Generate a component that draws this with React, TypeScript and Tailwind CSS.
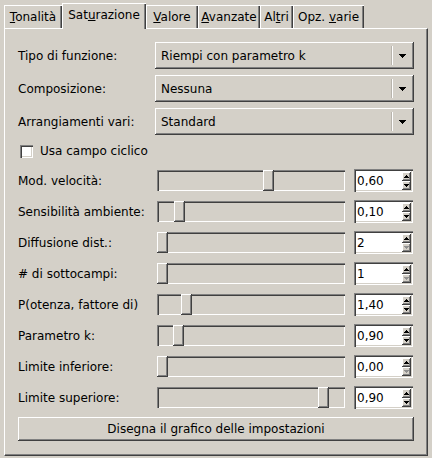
import React from "react";

const sunken =
  "shadow-[inset_1px_1px_0_#808080,inset_2px_2px_0_#404040,inset_-1px_-1px_0_#ffffff,inset_-2px_-2px_0_#d4d0c8]";
const raised =
  "shadow-[inset_-1px_-1px_0_#404040,inset_1px_1px_0_#ffffff,inset_-2px_-2px_0_#808080]";

const tabs = [
  { pre: "", key: "T", post: "onalità", w: "w-[58px]" },
  { pre: "Sat", key: "u", post: "razione", w: "w-[84px]", active: true },
  { pre: "", key: "V", post: "alore", w: "w-[52px]" },
  { pre: "", key: "A", post: "vanzate", w: "w-[62px]" },
  { pre: "Al", key: "t", post: "ri", w: "w-[33px]" },
  { pre: "Opz. ", key: "v", post: "arie", w: "w-[71px]" },
];

const combos = [
  { label: "Tipo di funzione:", value: "Riempi con parametro k" },
  { label: "Composizione:", value: "Nessuna" },
  { label: "Arrangiamenti vari:", value: "Standard" },
];

const sliders = [
  { label: "Mod. velocità:", value: "0,60", pos: 106, minDown: false },
  { label: "Sensibilità ambiente:", value: "0,10", pos: 17, minDown: false },
  { label: "Diffusione dist.:", value: "2", pos: 0, minDown: true },
  { label: "# di sottocampi:", value: "1", pos: 0, minDown: true },
  { label: "P(otenza, fattore di)", value: "1,40", pos: 24, minDown: false },
  { label: "Parametro k:", value: "0,90", pos: 16, minDown: false },
  { label: "Limite inferiore:", value: "0,00", pos: 0, minDown: true },
  { label: "Limite superiore:", value: "0,90", pos: 161, minDown: false },
];

function Arrow({ up, grey }: { up?: boolean; grey?: boolean }) {
  return (
    <svg width="5" height="3" viewBox="0 0 5 3" shapeRendering="crispEdges">
      <polygon
        points={up ? "2.5,0 5,3 0,3" : "0,0 5,0 2.5,3"}
        fill={grey ? "#909090" : "#000"}
      />
    </svg>
  );
}

function Spin({ value, minDown }: { value: string; minDown: boolean }) {
  return (
    <div className={`flex h-[23px] w-[59px] items-center bg-white pl-[3px] pr-[2px] ${sunken}`}>
      <span className="flex-1 text-[12px] leading-none text-black">{value}</span>
      <div className="flex h-[18px] w-[9px] flex-col">
        <div className={`flex h-[9px] items-center justify-center bg-[#d4d0c8] ${raised}`}>
          <Arrow up />
        </div>
        <div className={`flex h-[9px] items-center justify-center bg-[#d4d0c8] ${raised}`}>
          <Arrow grey={minDown} />
        </div>
      </div>
    </div>
  );
}

export default function App() {
  return (
    <div className="h-[458px] w-[432px] overflow-hidden bg-[#d4d0c8] pt-[3px] font-['DejaVu_Sans',sans-serif] text-[12px] text-black">
      <div className="ml-[4px] flex h-[25px] items-end">
        {tabs.map((t) => (
          <div
            key={t.key}
            className={
              t.active
                ? `relative z-10 -mb-px flex h-[26px] ${t.w} items-center justify-center bg-[#d4d0c8] pb-[2px] shadow-[inset_1px_1px_0_#ffffff,inset_-1px_0_0_#404040,inset_-2px_0_0_#808080]`
                : `flex h-[23px] ${t.w} items-center justify-center bg-[#d4d0c8] shadow-[inset_1px_1px_0_#ffffff,inset_-1px_0_0_#404040,inset_-2px_0_0_#808080]`
            }
          >
            <span className="whitespace-pre">
              {t.pre}
              <span className="underline">{t.key}</span>
              {t.post}
            </span>
          </div>
        ))}
      </div>

      <div className="ml-[4px] flex h-[428px] w-[424px] flex-col border-b border-l border-r border-t border-b-[#404040] border-l-white border-r-[#404040] border-t-white pl-[13px] pr-[12px] pt-[13px] shadow-[inset_-1px_-1px_0_#808080]">
        <div className="flex flex-col gap-[6px]">
          {combos.map((c) => (
            <div key={c.label} className="flex h-[27px] items-center">
              <span className="w-[137px]">{c.label}</span>
              <div
                className={`flex h-[27px] w-[259px] items-center bg-[#d4d0c8] pl-[6px] ${raised}`}
              >
                <span className="flex-1">{c.value}</span>
                <div className="h-[19px] w-px bg-white shadow-[-1px_0_0_#b8b4ac]" />
                <div className="flex w-[21px] justify-center pr-[2px]">
                  <svg width="7" height="4" viewBox="0 0 7 4" shapeRendering="crispEdges">
                    <rect x="0" y="0" width="7" height="1" fill="#000" />
                    <rect x="1" y="1" width="5" height="1" fill="#000" />
                    <rect x="2" y="2" width="3" height="1" fill="#000" />
                    <rect x="3" y="3" width="1" height="1" fill="#000" />
                  </svg>
                </div>
              </div>
            </div>
          ))}
        </div>

        <div className="mb-[8px] mt-[6px] flex h-[20px] items-center pl-[2px]">
          <div className={`h-[13px] w-[13px] bg-white ${sunken}`} />
          <span className="ml-[7px]">Usa campo ciclico</span>
        </div>

        <div className="flex flex-col gap-[8px]">
          {sliders.map((s) => (
            <div key={s.label} className="flex h-[23px] items-center">
              <span className="w-[139px] whitespace-nowrap">{s.label}</span>
              <div className={`relative h-[21px] w-[188px] ${sunken}`}>
                <div
                  className={`absolute top-0 h-[21px] w-[11px] bg-[#d4d0c8] ${raised}`}
                  style={{ left: s.pos }}
                />
              </div>
              <div className="ml-[9px]">
                <Spin value={s.value} minDown={s.minDown} />
              </div>
            </div>
          ))}
        </div>

        <div
          className={`mt-[8px] flex h-[24px] w-[396px] items-center justify-center bg-[#d4d0c8] ${raised}`}
        >
          Disegna il grafico delle impostazioni
        </div>
      </div>
    </div>
  );
}
